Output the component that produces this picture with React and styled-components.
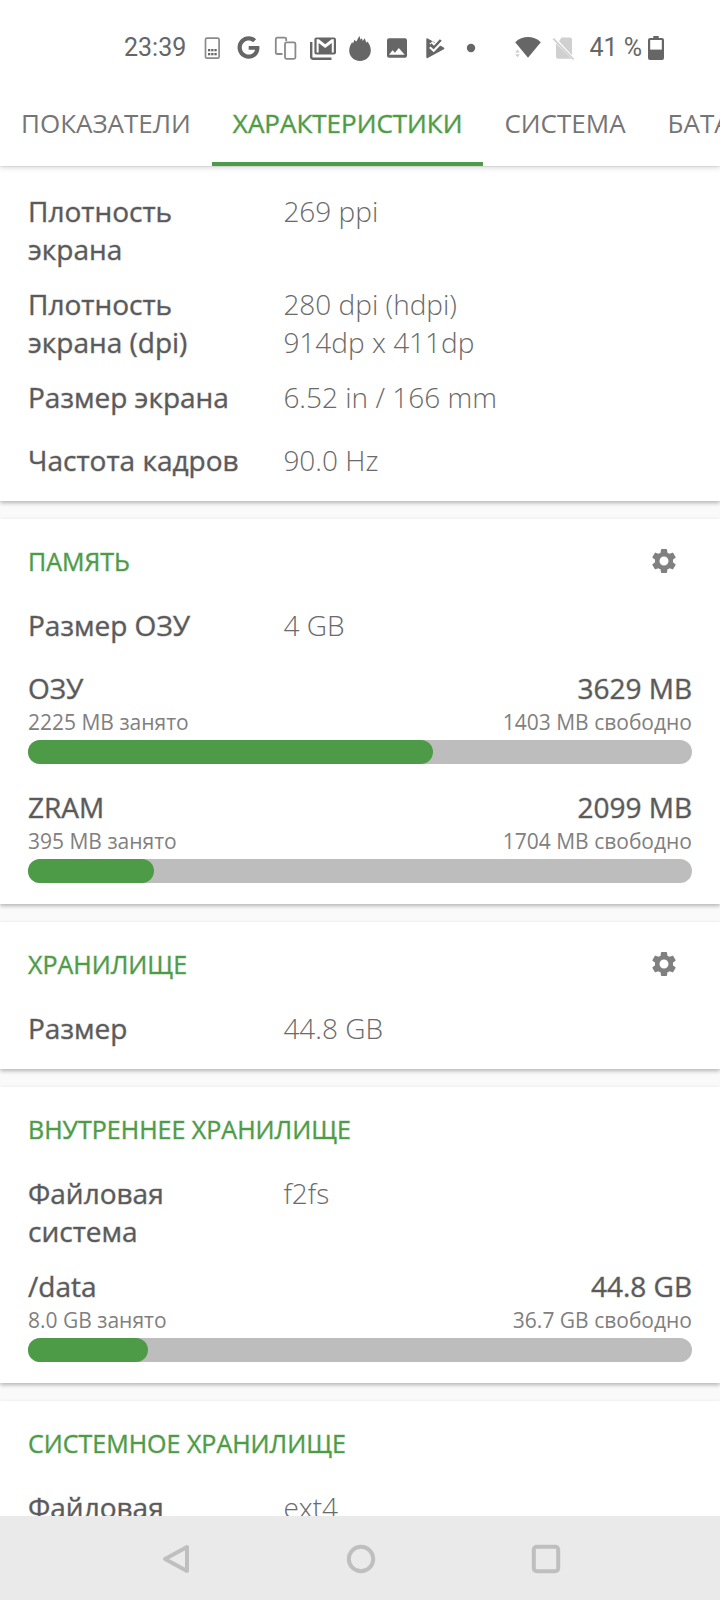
import { useState } from "react";

import styled, { createGlobalStyle, css } from "styled-components";
import { FaGoogle } from "react-icons/fa";
import { MdSettings } from "react-icons/md";

const GREEN = "#4e9b47";

const GlobalStyle = createGlobalStyle`
  * {
    box-sizing: border-box;
  }
  body {
    margin: 0;
    background: #fafafa;
    font-family: "Open Sans", "Noto Sans", sans-serif;
  }
  button {
    margin: 0;
    padding: 0;
    border: none;
    background: none;
    font: inherit;
    cursor: pointer;
  }
`;

// Open Sans has no medium cut here, a translucent outline thickens the regular one
const mediumText = css`
  font-weight: 400;
  -webkit-text-stroke: 1px ${(props) => (props.$green ? "rgba(78, 155, 71, 0.4)" : "rgba(90, 90, 90, 0.4)")};
`;

const Screen = styled.div`
  display: flex;
  flex-direction: column;
  height: 100vh;
  overflow: hidden;
`;

const Header = styled.header`
  position: relative;
  z-index: 1;
  flex: none;
  background: #fff;
  box-shadow: 0 1px 6px rgba(0, 0, 0, 0.2);
`;

const StatusBar = styled.div`
  display: flex;
  align-items: center;
  justify-content: space-between;
  height: 82px;
  padding: 13px 56px 0 124px;
  color: #666;
  font-family: Roboto, sans-serif;
  font-size: 25px;
`;

const StatusGroup = styled.div`
  display: flex;
  align-items: center;
`;

const Notifications = styled.div`
  display: flex;
  margin-left: 7px;
`;

const IconSlot = styled.span`
  display: flex;
  align-items: center;
  justify-content: center;
  width: 37px;
  height: 26px;
`;

const SystemIcons = styled.div`
  display: flex;
  align-items: center;
  gap: 10px;
`;

const Battery = styled.span`
  display: flex;
  align-items: center;
  gap: 6px;
  margin-left: 3px;
`;

const Tabs = styled.nav`
  display: flex;
  height: 84px;
  overflow: hidden;
`;

const Tab = styled.button`
  flex: none;
  padding: 1px 21px 0;
  border-bottom: 4px solid ${(props) => (props.$green ? GREEN : "transparent")};
  color: ${(props) => (props.$green ? GREEN : "#757575")};
  font-size: 26px;
  line-height: 34px;
  ${(props) => props.$green && mediumText}
`;

const Content = styled.main`
  display: flex;
  flex: 1;
  flex-direction: column;
  gap: 18px;
  min-height: 0;
  padding-top: 1px;
  overflow: hidden;
`;

const Card = styled.section`
  display: flex;
  flex: none;
  flex-direction: column;
  gap: 3px;
  padding: 25px 28px 0;
  background: #fff;
  box-shadow: 0 2px 4px rgba(0, 0, 0, 0.28);
`;

const CardHead = styled.div`
  display: flex;
  align-items: center;
  justify-content: space-between;
  height: 34px;
  margin-bottom: 25px;
`;

const Title = styled.h2`
  margin: 0;
  color: ${GREEN};
  font-size: 25px;
  line-height: 34px;
  ${mediumText}
`;

const SettingsButton = styled.button`
  display: flex;
  align-items: center;
  justify-content: center;
  width: 56px;
  height: 34px;
  color: #808080;
  font-size: 30px;
`;

const Row = styled.div`
  display: grid;
  grid-template-columns: 5fr 8fr;
  min-height: 60px;
  padding-bottom: 14px;
  font-size: 28px;
  line-height: 38px;
`;

const Label = styled.div`
  padding-right: 24px;
  color: #5a5a5a;
  ${mediumText}
`;

const Value = styled.div`
  color: #6a6a6a;
  font-weight: 300;
  white-space: pre-line;
`;

const Usage = styled.div`
  padding-bottom: 21px;
`;

const UsageTotal = styled.div`
  display: flex;
  justify-content: space-between;
  color: #5a5a5a;
  font-size: 28px;
  line-height: 38px;
  ${mediumText}
`;

const UsageDetail = styled.div`
  display: flex;
  justify-content: space-between;
  margin-bottom: 3px;
  color: #808080;
  font-size: 21px;
  line-height: 30px;
`;

const Track = styled.div`
  height: 24px;
  border-radius: 12px;
  background: #bdbdbd;
`;

const Fill = styled.div`
  height: 100%;
  border-radius: 12px;
  background: ${GREEN};
`;

const NavBar = styled.nav`
  display: grid;
  flex: none;
  grid-template-columns: repeat(3, 1fr);
  height: 84px;
  padding: 1px 82px 0 84px;
  background: #eaeaea;
`;

const NavButton = styled.button`
  display: flex;
  align-items: center;
  justify-content: center;
`;

function Glyph({ width = 24, children }) {
  return (
    <svg width={width} height="26" viewBox={`0 0 ${width} 26`} fill="#666" aria-hidden="true">
      {children}
    </svg>
  );
}

function SimToolkitIcon() {
  return (
    <Glyph>
      <rect x="5.5" y="3.2" width="13.6" height="20" rx="1.5" fill="none" stroke="#8a8a8a" strokeWidth="1.7" />
      {[8, 11.2, 14.4].map((x) => (
        <g key={x}>
          <rect x={x} y="14" width="2.3" height="2.3" />
          <rect x={x} y="18" width="2.3" height="2.3" />
        </g>
      ))}
    </Glyph>
  );
}

function DevicesIcon() {
  return (
    <Glyph>
      <path
        d="M8.5 19H3.3a1.5 1.5 0 0 1-1.5-1.5V4.2a1.5 1.5 0 0 1 1.5-1.5h7.4a1.5 1.5 0 0 1 1.5 1.5V6"
        fill="none"
        stroke="#8a8a8a"
        strokeWidth="1.8"
      />
      <rect x="11" y="7.4" width="10.4" height="16.4" rx="1.5" fill="none" stroke="#8a8a8a" strokeWidth="1.8" />
    </Glyph>
  );
}

function MailIcon() {
  return (
    <Glyph width={28}>
      <path d="M2.2 7v15a1.8 1.8 0 0 0 1.8 1.8h18.5" fill="none" stroke="#666" strokeWidth="2.4" />
      <rect x="5.4" y="2.4" width="21.6" height="17" rx="2" />
      <path d="M7.6 4.200h2.200l6.400 5 6.400-5h2.200v13.400h-2V8l-6.600 5-6.600-5v9.600h-2z" fill="#fff" />
    </Glyph>
  );
}

function FlameIcon() {
  return (
    <Glyph>
      <path d="M12 26C5.6 26 1.2 21.3 1.2 15.3C1.2 11.7 2.8 9.2 4.2 6.9L4.9 8.6C5.6 7.4 6.1 6.3 6.3 4.8L8.2 6.6C9.3 5.200 9.900 3.200 11.600 1C12 2.500 12.200 3.500 12.300 4.700L13.600 3.200C14.300 4.100 14.600 4.900 14.800 5.900L16.700 3.200C17.500 5 17.700 6.300 18.600 7.700L19.500 6.400C21.300 9 22.800 11.700 22.800 15.300C22.800 21.300 18.400 26 12 26Z" />
    </Glyph>
  );
}

function PhotoIcon() {
  return (
    <Glyph>
      <rect x="2" y="3.2" width="20" height="19.6" rx="2" />
      <path d="M4 19.700l3.600-4.500 2.400 2.600 3.800-4.700 5.900 6.600z" fill="#fff" />
    </Glyph>
  );
}

function PlayCheckIcon() {
  return (
    <Glyph>
      <path d="M4.300 4.400q0-1.500 1.400-.9L21.800 12.400q1.400.9 0 1.900L5.700 23q-1.400.6-1.400-.9z" />
      <path d="M9 7.500l3.300 3.700 5-6.200" fill="none" stroke="#fff" strokeWidth="4" />
      <path d="M8.500 9.300l3.500 3.400 6.800-7.700" fill="none" stroke="#666" strokeWidth="2.600" />
      <path d="M7.800 12.300l3.900 3.500 8-8.300" fill="none" stroke="#fff" strokeWidth="2" />
    </Glyph>
  );
}

function DotIcon() {
  return (
    <Glyph>
      <circle cx="12" cy="13" r="4.2" />
    </Glyph>
  );
}

function WifiIcon() {
  return (
    <Glyph width={28}>
      <path d="M1.2 7.2C8.6.4 19.4.4 26.8 7.2L14 22.7z" />
      <path d="M1.2 17.5l2.3-3 2.3 3zM1.2 19.2l2.3 3 2.3-3z" fill="#ccc" />
    </Glyph>
  );
}

function NoSimIcon() {
  return (
    <Glyph>
      <path d="M9.5 2.5H18a2 2 0 0 1 2 2v15.8L7 6.2zM4 8.2l15.5 15.6H6a2 2 0 0 1-2-2z" fill="#d0d0d0" />
      <path d="M1.3 3.6L21.5 24.3" stroke="#d0d0d0" strokeWidth="1.8" />
    </Glyph>
  );
}

function BatteryIcon() {
  return (
    <Glyph width={16}>
      <path d="M5.3 1h5.400v2H14a2 2 0 0 1 2 2V23a2 2 0 0 1-2 2H2a2 2 0 0 1-2-2V5a2 2 0 0 1 2-2h3.300z" />
      <rect x="2.2" y="5" width="11.6" height="9.6" fill="#fff" />
    </Glyph>
  );
}

const notifications = [
  <SimToolkitIcon />,
  <FaGoogle size={23} />,
  <DevicesIcon />,
  <MailIcon />,
  <FlameIcon />,
  <PhotoIcon />,
  <PlayCheckIcon />,
  <DotIcon />,
];

const tabs = ["ПОКАЗАТЕЛИ", "ХАРАКТЕРИСТИКИ", "СИСТЕМА", "БАТАРЕЯ"];

const cards = [
  {
    rows: [
      ["Плотность экрана", "269 ppi"],
      ["Плотность экрана (dpi)", "280 dpi (hdpi)\n914dp x 411dp"],
      ["Размер экрана", "6.52 in / 166 mm"],
      ["Частота кадров", "90.0 Hz"],
    ],
  },
  {
    title: "ПАМЯТЬ",
    settings: true,
    rows: [["Размер ОЗУ", "4 GB"]],
    usage: [
      { name: "ОЗУ", total: "3629 MB", used: "2225 MB", free: "1403 MB", percent: 61 },
      { name: "ZRAM", total: "2099 MB", used: "395 MB", free: "1704 MB", percent: 19 },
    ],
  },
  {
    title: "ХРАНИЛИЩЕ",
    settings: true,
    rows: [["Размер", "44.8 GB"]],
  },
  {
    title: "ВНУТРЕННЕЕ ХРАНИЛИЩЕ",
    rows: [["Файловая система", "f2fs"]],
    usage: [{ name: "/data", total: "44.8 GB", used: "8.0 GB", free: "36.7 GB", percent: 18 }],
  },
  {
    title: "СИСТЕМНОЕ ХРАНИЛИЩЕ",
    rows: [["Файловая система", "ext4"]],
  },
];

function UsageBar({ name, total, used, free, percent }) {
  return (
    <Usage>
      <UsageTotal>
        <span>{name}</span>
        <span>{total}</span>
      </UsageTotal>
      <UsageDetail>
        <span>{used} занято</span>
        <span>{free} свободно</span>
      </UsageDetail>
      <Track role="progressbar" aria-label={name} aria-valuenow={percent}>
        <Fill style={{ width: `${percent}%` }} />
      </Track>
    </Usage>
  );
}

function InfoCard({ title, settings, rows, usage = [] }) {
  return (
    <Card>
      {title && (
        <CardHead>
          <Title $green>{title}</Title>
          {settings && (
            <SettingsButton aria-label="Настройки">
              <MdSettings />
            </SettingsButton>
          )}
        </CardHead>
      )}
      {rows.map(([label, value]) => (
        <Row key={label}>
          <Label>{label}</Label>
          <Value>{value}</Value>
        </Row>
      ))}
      {usage.map((item) => (
        <UsageBar key={item.name} {...item} />
      ))}
    </Card>
  );
}

function App() {
  const [active, setActive] = useState(1);

  return (
    <Screen>
      <GlobalStyle />
      <Header>
        <StatusBar>
          <StatusGroup>
            <span>23:39</span>
            <Notifications>
              {notifications.map((icon, i) => (
                <IconSlot key={i}>{icon}</IconSlot>
              ))}
            </Notifications>
          </StatusGroup>
          <SystemIcons>
            <WifiIcon />
            <NoSimIcon />
            <Battery>
              41 %
              <BatteryIcon />
            </Battery>
          </SystemIcons>
        </StatusBar>
        <Tabs>
          {tabs.map((tab, i) => (
            <Tab key={tab} $green={i === active} onClick={() => setActive(i)}>
              {tab}
            </Tab>
          ))}
        </Tabs>
      </Header>
      <Content>
        {cards.map((card, i) => (
          <InfoCard key={i} {...card} />
        ))}
      </Content>
      <NavBar>
        <NavButton aria-label="Назад">
          <svg width="30" height="30" viewBox="0 0 30 30" fill="none" stroke="#bfbfbf" strokeWidth="4" strokeLinejoin="round">
            <path d="M26 3v24L4 15z" />
          </svg>
        </NavButton>
        <NavButton aria-label="Домой">
          <svg width="30" height="30" viewBox="0 0 30 30" fill="none" stroke="#bfbfbf" strokeWidth="4">
            <circle cx="15" cy="15" r="12.2" />
          </svg>
        </NavButton>
        <NavButton aria-label="Недавние">
          <svg width="30" height="30" viewBox="0 0 30 30" fill="none" stroke="#bfbfbf" strokeWidth="4">
            <rect x="2.8" y="2.8" width="24.4" height="24.4" rx="3" />
          </svg>
        </NavButton>
      </NavBar>
    </Screen>
  );
}

export default App;
